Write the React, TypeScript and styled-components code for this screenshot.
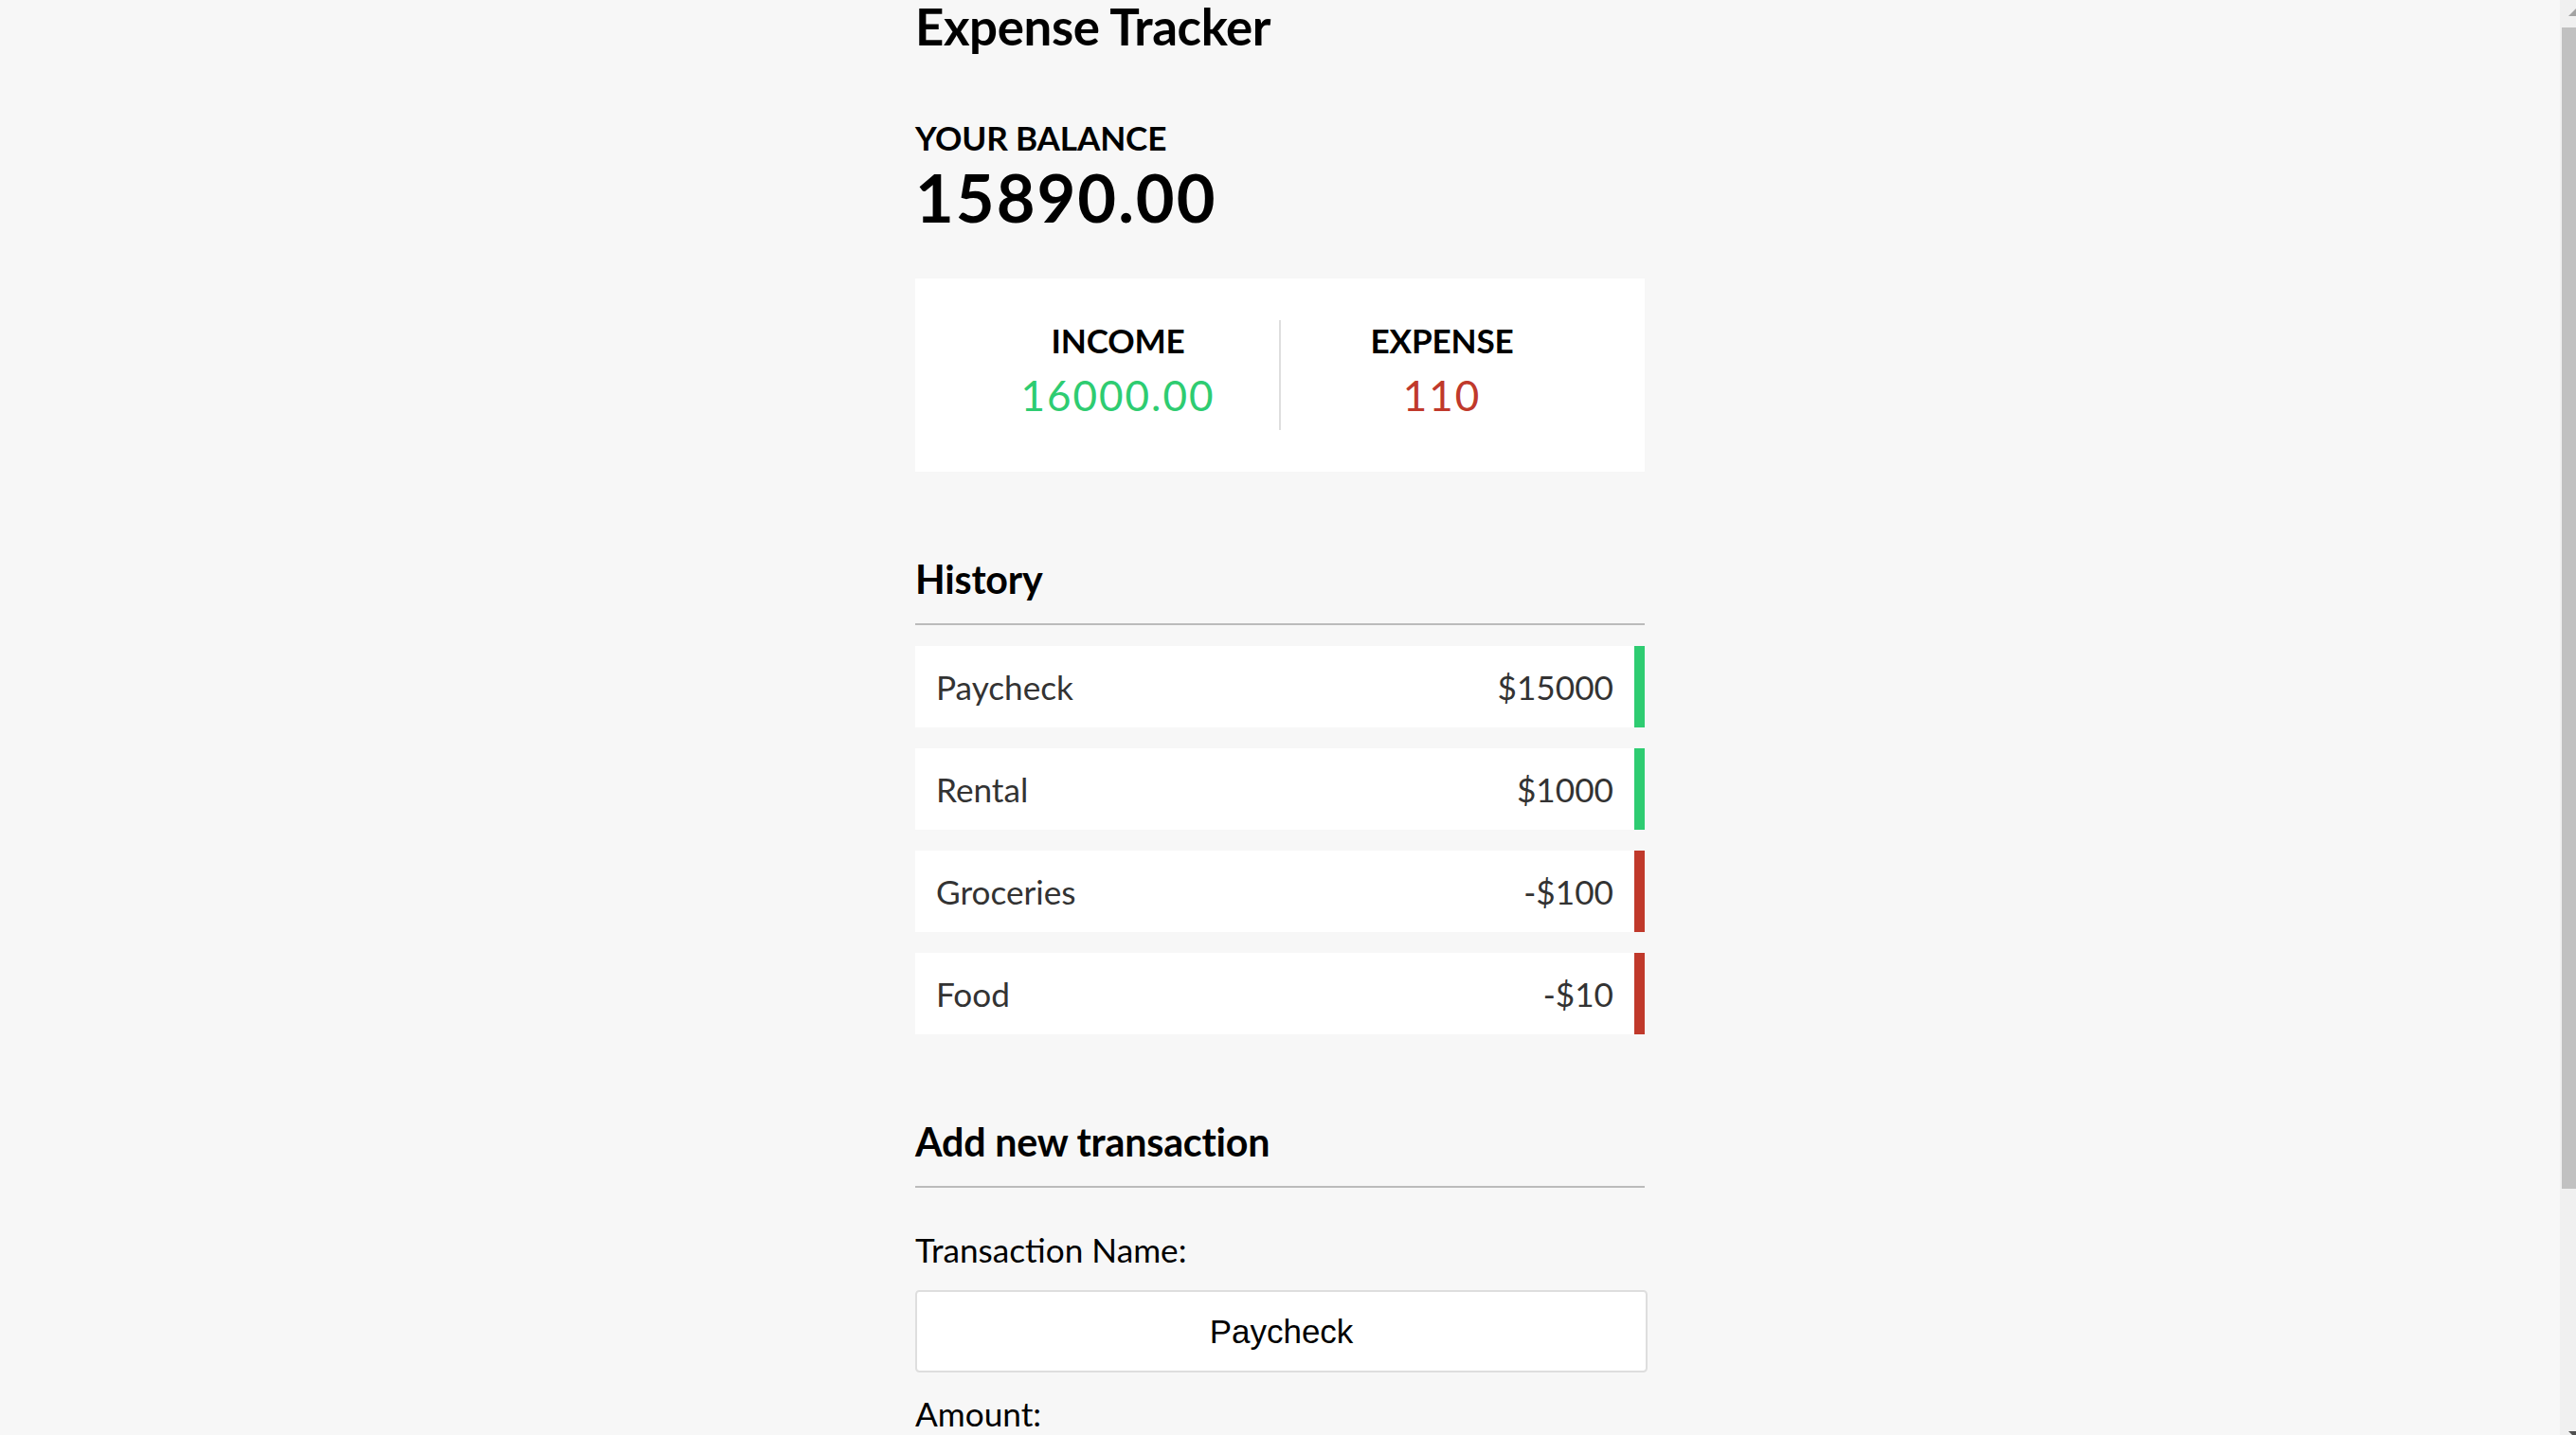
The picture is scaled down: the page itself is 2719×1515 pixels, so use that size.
import styled, { createGlobalStyle } from 'styled-components'

const GlobalStyle = createGlobalStyle`
	html, body {
		margin: 0;
		padding: 0;
		height: 100%;
		overflow: hidden;
		background-color: #f7f7f7;
		font-family: 'Lato', 'Open Sans', sans-serif;
	}

	* {
		box-sizing: border-box;
	}
`

const colors = {
	plus: '#2ecc71',
	minus: '#c0392b',
}

const Page = styled.div`
	display: flex;
	height: 100vh;
	overflow: hidden;
`

const Main = styled.main`
	flex: 1;
	display: flex;
	justify-content: center;
	overflow: hidden;
`

const Container = styled.div`
	width: 770px;
	margin-top: -4px;
`

const Title = styled.h2`
	margin: 0 0 65px;
	font-size: 52.8px;
	font-weight: 700;
	letter-spacing: -0.4px;
	color: #000;
`

const Heading4 = styled.h4`
	margin: 0;
	font-size: 35.2px;
	font-weight: 700;
	letter-spacing: -0.2px;
	text-transform: uppercase;
	color: #000;
`

const Balance = styled.h1`
	margin: 0;
	font-size: 70.4px;
	font-weight: 700;
	letter-spacing: 2px;
	color: #000;
`

const IncomeExpense = styled.div`
	display: flex;
	justify-content: space-between;
	background-color: #fff;
	padding: 44px;
	margin: 44px 0;

	& > div {
		flex: 1;
		text-align: center;
	}

	& > div:first-of-type {
		border-right: 2.2px solid #dedede;
	}
`

const Money = styled.p<{ $type: 'plus' | 'minus' }>`
	margin: 11px 0;
	font-size: 44px;
	letter-spacing: 2px;
	color: ${props => colors[props.$type]};
`

const SectionTitle = styled.h3`
	margin: 88px 0 22px;
	padding-bottom: 22px;
	border-bottom: 2.2px solid #bbb;
	font-size: 41.2px;
	font-weight: 700;
	letter-spacing: -0.2px;
	color: #000;
`

const List = styled.ul`
	list-style-type: none;
	padding: 0;
	margin: 0 0 88px;
`

const Item = styled.li<{ $type: 'plus' | 'minus' }>`
	display: flex;
	justify-content: space-between;
	background-color: #fff;
	color: #333;
	font-size: 35.2px;
	padding: 22px;
	margin: 22px 0;
	border-right: 11px solid ${props => colors[props.$type]};
`

const FormControl = styled.div``

const Label = styled.label`
	display: inline-block;
	margin: 22px 0;
	font-size: 35.2px;
	color: #000;
`

const Input = styled.input`
	display: block;
	width: calc(100% + 3px);
	height: 87px;
	padding: 0 22px;
	border: 2.2px solid #dedede;
	border-radius: 4.4px;
	background-color: #fff;
	font-family: 'Liberation Sans', Arial, sans-serif;
	font-size: 35px;
	color: #000;
	text-align: center;
	outline: none;
`

const Button = styled.button`
	display: block;
	width: 100%;
	margin: 22px 0 66px;
	padding: 22px;
	border: 0;
	background-color: #9c88ff;
	color: #fff;
	font-family: inherit;
	font-size: 35.2px;
`

const Scrollbar = styled.div`
	width: 17px;
	height: 100vh;
	flex-shrink: 0;
	display: flex;
	flex-direction: column;
	background-color: #f0f0f0;
	overflow: hidden;
`

const ArrowBox = styled.div<{ $height: number }>`
	height: ${props => props.$height}px;
	flex-shrink: 0;

	& svg {
		display: block;
	}
`

const Thumb = styled.div`
	height: 1226px;
	margin-left: 2px;
	flex-shrink: 0;
	background-color: #c1c1c1;
`

const Spacer = styled.div`
	flex: 1;
`

type Transaction = { name: string, amount: string, type: 'plus' | 'minus' }

const transactions: Transaction[] = [
	{ name: 'Paycheck', amount: '$15000', type: 'plus' },
	{ name: 'Rental', amount: '$1000', type: 'plus' },
	{ name: 'Groceries', amount: '-$100', type: 'minus' },
	{ name: 'Food', amount: '-$10', type: 'minus' },
]

const App = () => {
	return (
		<Page>
			<GlobalStyle />
			<Main>
				<Container>
					<Title>Expense Tracker</Title>
					<Heading4>Your Balance</Heading4>
					<Balance>15890.00</Balance>

					<IncomeExpense>
						<div>
							<Heading4>Income</Heading4>
							<Money $type="plus">16000.00</Money>
						</div>
						<div>
							<Heading4>Expense</Heading4>
							<Money $type="minus">110</Money>
						</div>
					</IncomeExpense>

					<SectionTitle>History</SectionTitle>
					<List>
						{transactions.map(t => (
							<Item key={t.name} $type={t.type}>
								<span>{t.name}</span>
								<span>{t.amount}</span>
							</Item>
						))}
					</List>

					<SectionTitle>Add new transaction</SectionTitle>
					<form onSubmit={e => e.preventDefault()}>
						<FormControl>
							<Label htmlFor="name">Transaction Name:</Label>
							<Input id="name" type="text" defaultValue="Paycheck" />
						</FormControl>
						<FormControl>
							<Label htmlFor="amount">Amount:</Label>
							<Input id="amount" type="number" defaultValue="15000" />
						</FormControl>
						<Button>Add transaction</Button>
					</form>
				</Container>
			</Main>
			<Scrollbar>
				<ArrowBox $height={29}>
					<svg width="17" height="29">
						<polygon points="17,9 9,17 17,17" fill="#a3a3a3" />
					</svg>
				</ArrowBox>
				<Thumb />
				<Spacer />
				<ArrowBox $height={4}>
					<svg width="17" height="4">
						<polygon points="9,0 17,0 17,8" fill="#505050" />
					</svg>
				</ArrowBox>
			</Scrollbar>
		</Page>
	)
}

export default App
